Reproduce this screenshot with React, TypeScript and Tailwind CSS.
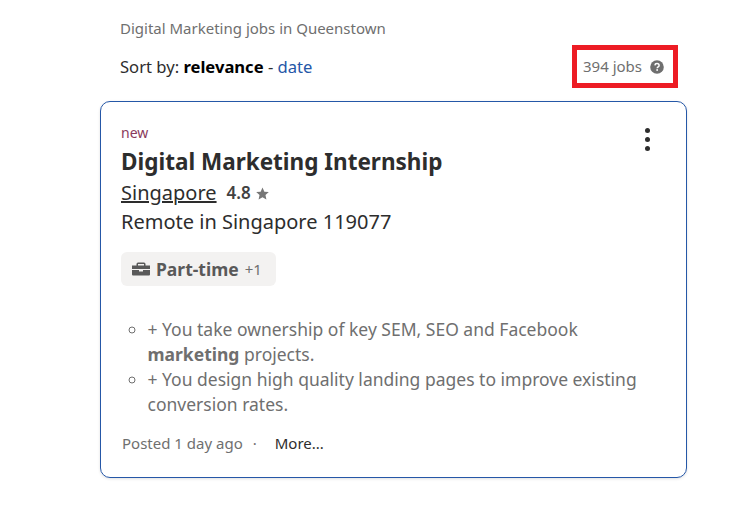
import React from 'react';

const BriefcaseIcon = () => (
    <svg width="18" height="16" viewBox="0 0 18 16" fill="#595959">
        <path d="M6 1.5h6A1.5 1.5 0 0 1 13.5 3v1.5H18V8H0V4.5h4.5V3A1.5 1.5 0 0 1 6 1.5zM6 3v1.5h6V3H6z" fillRule="evenodd" />
        <path d="M0 9h7v1.5h4V9h7v4.5a1 1 0 0 1-1 1H1a1 1 0 0 1-1-1V9z" />
    </svg>
);

const HelpIcon = () => (
    <svg width="14" height="14" viewBox="0 0 14 14">
        <circle cx="7" cy="7" r="6.8" fill="#6f6f6f" />
        <path d="M4.9 5.4C5 4.2 5.9 3.6 7 3.6c1.2 0 2.1.7 2.1 1.8 0 1.6-1.9 1.5-1.9 2.9" fill="none" stroke="#fff" strokeWidth="1.5" />
        <rect x="6.3" y="9.2" width="1.7" height="1.6" fill="#fff" />
    </svg>
);

const StarIcon = () => (
    <svg width="13" height="13" viewBox="0 0 14 14" fill="#767676">
        <path d="M7 .6l2 4.4 4.8.5-3.6 3.2 1 4.7L7 11l-4.2 2.4 1-4.7L.2 5.5 5 5z" />
    </svg>
);

const App = () => {
    return (
        <div className="w-[741px] h-[521px] bg-white overflow-hidden pl-[100px] pt-[16px] font-['Noto_Sans',sans-serif]">
            <div className="w-[587px]">
                <div className="pl-5 text-[15px] leading-6 text-[#6f6f6f]">Digital Marketing jobs in Queenstown</div>
                <div className="flex justify-between items-center pl-5 pr-[9px] mt-[5px] h-[43px]">
                    <div className="pt-[2px] text-[16.6px] text-[#2d2d2d]">
                        Sort by: <span className="font-bold text-[#000]">relevance</span> - <span className="text-[#2557a7]">date</span>
                    </div>
                    <div className="w-[106px] h-[43px] border-[5px] border-[#ed1c24] flex items-center pl-[6px] gap-[8px] text-[15px] text-[#6f6f6f]">
                        394 jobs <HelpIcon />
                    </div>
                </div>
                <div className="relative mt-[13px] h-[377px] border border-[#2557a7] rounded-[10px] pl-5 pt-[21px] shadow-[0_1px_3px_rgba(0,0,0,0.12)]">
                    <div className="text-[14px] leading-[19px] text-[#8a3a5c]">new</div>
                    <h2 className="mt-[5px] text-[22.5px] leading-[30px] font-bold text-[#2d2d2d]">Digital Marketing Internship</h2>
                    <div className="flex items-center h-[30px] mt-[1px]">
                        <span className="text-[20px] text-[#2d2d2d] underline">Singapore</span>
                        <span className="ml-[10px] text-[17px] font-semibold text-[#424242]">4.8</span>
                        <span className="ml-[5px]"><StarIcon /></span>
                    </div>
                    <div className="text-[20px] leading-[28px] text-[#2d2d2d]">Remote in Singapore 119077</div>
                    <div className="mt-[16px] flex items-center h-[34px] w-[155px] rounded-[6px] bg-[#f3f2f1] pl-[11px]">
                        <BriefcaseIcon />
                        <span className="ml-[6px] text-[17.5px] font-bold text-[#595959]">Part-time</span>
                        <span className="ml-[6px] text-[15px] text-[#6f6f6f]">+1</span>
                    </div>
                    <ul className="mt-[31px] w-[520px] pl-[26.5px] list-[circle] text-[17.5px] leading-[25px] text-[#6f6f6f]">
                        <li>+ You take ownership of key SEM, SEO and Facebook <b className="font-bold">marketing</b> projects.</li>
                        <li>+ You design high quality landing pages to improve existing conversion rates.</li>
                    </ul>
                    <div className="flex items-center mt-[16px] pl-[1px] text-[15px] leading-5 text-[#6f6f6f]">
                        <span>Posted 1 day ago</span>
                        <span className="ml-[10px]">·</span>
                        <span className="ml-[18px] text-[#2d2d2d]">More...</span>
                    </div>
                    <div className="absolute right-[36px] top-[26px] flex flex-col gap-[4px]">
                        <span className="w-[5px] h-[5px] rounded-full bg-[#2d2d2d]" />
                        <span className="w-[5px] h-[5px] rounded-full bg-[#2d2d2d]" />
                        <span className="w-[5px] h-[5px] rounded-full bg-[#2d2d2d]" />
                    </div>
                </div>
            </div>
        </div>
    );
};

export default App;
